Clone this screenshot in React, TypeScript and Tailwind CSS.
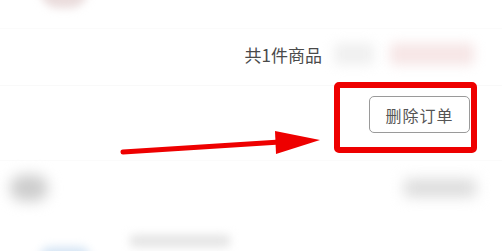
import React from "react";

export default function App() {
  return (
    <div
      className="relative w-[502px] h-[251px] overflow-hidden bg-white"
      style={{ fontFamily: '"Noto Sans CJK SC", "Noto Sans", sans-serif' }}
    >
      {/* top row: partially visible avatar */}
      <div className="h-[28px] flex items-start">
        <div className="ml-[40px] -mt-[28px] w-[48px] h-[36px] rounded-full bg-[#eadcdc] blur-[4px]" />
      </div>

      {/* summary row */}
      <div className="h-[57px] border-t border-[#fbfbfb] flex items-center justify-end pr-[28px]">
        <span className="text-[17px] leading-none text-[#4a4a4a] mr-[12px] -mt-[6px]">共1件商品</span>
        <div className="-mt-[6px] w-[40px] h-[22px] rounded bg-[#f0f0f0] blur-[6px] mr-[16px]" />
        <div className="-mt-[6px] w-[84px] h-[22px] rounded bg-[#f6e6e6] blur-[6px]" />
      </div>

      {/* action row */}
      <div className="h-[75px] border-t border-[#f9f9f9] flex justify-end pr-[32px] pt-[10px]">
        <button className="w-[101px] h-[37px] rounded-[5px] border border-[#9a9a9a] bg-white text-[16px] text-[#555] tracking-[1px]">
          删除订单
        </button>
      </div>

      {/* next order header */}
      <div className="h-[55px] border-t border-[#fbfbfb] flex items-center justify-between px-[10px]">
        <div className="w-[38px] h-[26px] rounded-full bg-[#cdcdcd] blur-[7px]" />
        <div className="w-[72px] h-[18px] rounded bg-[#dcdcdc] blur-[7px] mr-[16px]" />
      </div>

      {/* next order body */}
      <div className="flex items-start pl-[40px] pt-[20px] gap-[40px]">
        <div className="mt-[12px] w-[50px] h-[20px] rounded-full bg-[#d4e4f4] blur-[5px]" />
        <div className="w-[100px] h-[12px] rounded bg-[#e4e4e4] blur-[5px]" />
      </div>

      {/* annotation overlay */}
      <svg className="absolute left-0 top-0" width="502" height="251" viewBox="0 0 502 251">
        <rect x="337" y="85" width="137" height="65" rx="2" fill="none" stroke="#ee0000" strokeWidth="6" />
        <line x1="123" y1="152" x2="280" y2="142" stroke="#ee0000" strokeWidth="5" strokeLinecap="round" />
        <polygon points="275,131 320,140 276,154" fill="#ee0000" />
      </svg>
    </div>
  );
}
